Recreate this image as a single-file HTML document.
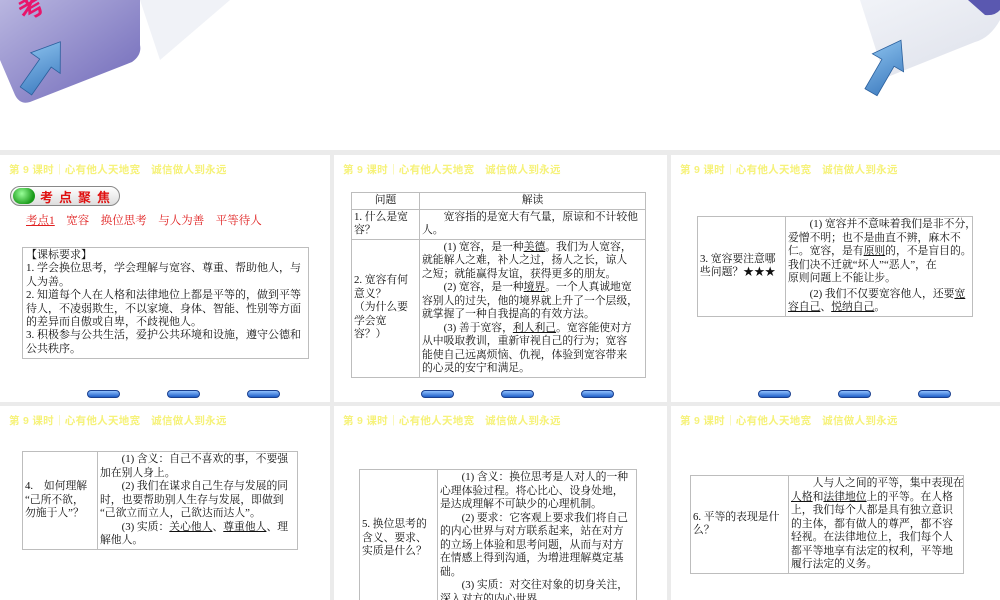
<!DOCTYPE html>
<html><head><meta charset="utf-8"><style>
*{margin:0;padding:0;box-sizing:border-box}
body{width:1000px;height:600px;position:relative;overflow:hidden;background:#fff;font-family:"Liberation Serif","Noto Serif CJK SC",serif;color:#111}
.gray{position:absolute;background:#ebebeb}
.p{position:absolute;background:#fff;overflow:hidden}
.h{position:absolute;left:9px;top:7px;font:bold 10.5px "Liberation Sans","Noto Sans CJK SC",sans-serif;color:#f6f27a;white-space:nowrap;letter-spacing:0.3px}
.btn{position:absolute;width:33px;height:8px;border-radius:4px;background:linear-gradient(#8fc0ff,#1f5fc8);border:1px solid #1a3f8f}
table{position:absolute;border-collapse:collapse;table-layout:fixed;font-size:10.8px;line-height:13.5px;white-space:nowrap}
td{border:1px solid #bdbdbd;padding:1px 2px;vertical-align:middle;overflow:hidden}
.i{text-indent:2em}
</style></head><body>
<svg style="position:absolute;left:0;top:0" width="1000" height="150">
<defs><linearGradient id="pg" x1="0" y1="0" x2="1" y2="1"><stop offset="0" stop-color="#b9b6e0"/><stop offset="1" stop-color="#6e67b8"/></linearGradient>
<linearGradient id="ag" x1="0" y1="0" x2="1" y2="1"><stop offset="0" stop-color="#8ec4ef"/><stop offset="1" stop-color="#3a78bd"/></linearGradient>
<linearGradient id="wg" x1="0" y1="0" x2="1" y2="1"><stop offset="0" stop-color="#f4f6fa"/><stop offset="1" stop-color="#dde0ea"/></linearGradient></defs>
<path d="M0 0 L140 0 L140 45 Q142 55 132 62 L30 102 Q20 105 15 95 L0 60 Z" fill="url(#pg)"/>
<path d="M140 0 L230 0 L160 60 Z" fill="#f0f2f7"/>
<text x="22" y="18" font-size="26" font-weight="bold" fill="#e8156b" font-family="Noto Sans CJK SC" transform="rotate(-30 30 15)">考</text>
<g transform="translate(42,68) rotate(35)"><path d="M0 -32 L-18 -6 L-7 -6 L-7 28 L7 28 L7 -6 L18 -6 Z" fill="url(#ag)" stroke="#2a5f9c" stroke-width="0.8"/></g>
<path d="M810 0 L1000 0 L1000 20 Q990 38 975 42 L885 78 L860 0 Z" fill="url(#wg)"/>
<path d="M968 0 L1000 0 L1000 10 Q995 16 985 15 Z" fill="#5a58b0"/>
<g transform="translate(885,68) rotate(30)"><path d="M0 -32 L-18 -6 L-7 -6 L-7 28 L7 28 L7 -6 L18 -6 Z" fill="url(#ag)" stroke="#2a5f9c" stroke-width="0.8"/></g>
</svg>
<div class="gray" style="left:0;top:150px;width:1000px;height:450px"></div>

<div class="p" style="left:0;top:155px;width:330px;height:247px">
<div class="h">第 9 课时｜心有他人天地宽　诚信做人到永远</div>
<div style="position:absolute;left:10px;top:31px;width:110px;height:20px;border-radius:10px;border:1px solid #888;background:linear-gradient(#fff,#ddd)"></div>
<div style="position:absolute;left:13px;top:33px;width:22px;height:16px;border-radius:8px;background:radial-gradient(circle at 40% 35%,#9f9,#1a9a1a 70%)"></div>
<div style="position:absolute;left:40px;top:32px;font:bold 13px 'Noto Sans CJK SC',sans-serif;color:#e01010;letter-spacing:6px">考点聚焦</div>
<div style="position:absolute;left:26px;top:57px;font-size:11.5px;color:#e02020;white-space:nowrap"><u>考点1</u>　宽容　换位思考　与人为善　平等待人</div>
<div style="position:absolute;left:22px;top:92px;width:287px;border:1px solid #bdbdbd;padding:1px 3px 2px;font-size:11px;line-height:13.4px;white-space:nowrap;overflow:hidden">【课标要求】<br>1. 学会换位思考，学会理解与宽容、尊重、帮助他人，与<br>人为善。<br>2. 知道每个人在人格和法律地位上都是平等的，做到平等<br>待人，不凌弱欺生，不以家境、身体、智能、性别等方面<br>的差异而自傲或自卑，不歧视他人。<br>3. 积极参与公共生活，爱护公共环境和设施，遵守公德和<br>公共秩序。</div>
<div class="btn" style="left:87px;top:235px"></div><div class="btn" style="left:167px;top:235px"></div><div class="btn" style="left:247px;top:235px"></div>
</div>

<div class="p" style="left:334px;top:155px;width:333px;height:247px">
<div class="h">第 9 课时｜心有他人天地宽　诚信做人到永远</div>
<table style="left:17px;top:37px;width:295px">
<col style="width:68px"><col>
<tr><td style="text-align:center">问题</td><td style="text-align:center">解读</td></tr>
<tr><td>1. 什么是宽<br>容？</td><td><div class="i">宽容指的是宽大有气量，原谅和不计较他<br>人。</div></td></tr>
<tr><td>2. 宽容有何<br>意义？<br>（为什么要<br>学会宽<br>容？）</td><td><div class="i">(1) 宽容，是一种<u>美德</u>。我们为人宽容，<br>就能解人之难，补人之过，扬人之长，谅人<br>之短；就能赢得友谊，获得更多的朋友。</div><div class="i">(2) 宽容，是一种<u>境界</u>。一个人真诚地宽<br>容别人的过失，他的境界就上升了一个层级，<br>就掌握了一种自我提高的有效方法。</div><div class="i">(3) 善于宽容，<u>利人利己</u>。宽容能使对方<br>从中吸取教训，重新审视自己的行为；宽容<br>能使自己远离烦恼、仇视，体验到宽容带来<br>的心灵的安宁和满足。</div></td></tr>
</table>
<div class="btn" style="left:87px;top:235px"></div><div class="btn" style="left:167px;top:235px"></div><div class="btn" style="left:247px;top:235px"></div>
</div>

<div class="p" style="left:671px;top:155px;width:329px;height:247px">
<div class="h">第 9 课时｜心有他人天地宽　诚信做人到永远</div>
<table style="left:26px;top:61px;width:276px">
<col style="width:88px"><col>
<tr><td>3. 宽容要注意哪<br>些问题？★★★</td><td><div class="i">(1) 宽容并不意味着我们是非不分，<br>爱憎不明；也不是曲直不辨，麻木不<br>仁。宽容，是有<u>原则</u>的，不是盲目的。<br>我们决不迁就“坏人”“恶人”，在<br>原则问题上不能让步。</div><div class="i" style="margin-top:2px">(2) 我们不仅要宽容他人，还要<u>宽<br>容自己</u>、<u>悦纳自己</u>。</div></td></tr>
</table>
<div class="btn" style="left:87px;top:235px"></div><div class="btn" style="left:167px;top:235px"></div><div class="btn" style="left:247px;top:235px"></div>
</div>

<div class="p" style="left:0;top:406px;width:330px;height:194px">
<div class="h">第 9 课时｜心有他人天地宽　诚信做人到永远</div>
<table style="left:22px;top:45px;width:276px">
<col style="width:75px"><col>
<tr><td>4.　如何理解<br>“己所不欲，<br>勿施于人”？</td><td><div class="i">(1) 含义：自己不喜欢的事，不要强<br>加在别人身上。</div><div class="i">(2) 我们在谋求自己生存与发展的同<br>时，也要帮助别人生存与发展，即做到<br>“己欲立而立人，己欲达而达人”。</div><div class="i">(3) 实质：<u>关心他人</u>、<u>尊重他人</u>、理<br>解他人。</div></td></tr>
</table>
</div>

<div class="p" style="left:334px;top:406px;width:333px;height:194px">
<div class="h">第 9 课时｜心有他人天地宽　诚信做人到永远</div>
<table style="left:25px;top:63px;width:278px">
<col style="width:78px"><col>
<tr><td>5. 换位思考的<br>含义、要求、<br>实质是什么？</td><td><div class="i">(1) 含义：换位思考是人对人的一种<br>心理体验过程。将心比心、设身处地，<br>是达成理解不可缺少的心理机制。</div><div class="i">(2) 要求：它客观上要求我们将自己<br>的内心世界与对方联系起来，站在对方<br>的立场上体验和思考问题，从而与对方<br>在情感上得到沟通，为增进理解奠定基<br>础。</div><div class="i">(3) 实质：对交往对象的切身关注，<br>深入对方的内心世界。</div></td></tr>
</table>
</div>

<div class="p" style="left:671px;top:406px;width:329px;height:194px">
<div class="h">第 9 课时｜心有他人天地宽　诚信做人到永远</div>
<table style="left:19px;top:69px;width:274px">
<col style="width:98px"><col>
<tr><td>6. 平等的表现是什<br>么？</td><td><div class="i">人与人之间的平等，集中表现在<br><u>人格</u>和<u>法律地位</u>上的平等。在人格<br>上，我们每个人都是具有独立意识<br>的主体，都有做人的尊严，都不容<br>轻视。在法律地位上，我们每个人<br>都平等地享有法定的权利，平等地<br>履行法定的义务。</div></td></tr>
</table>
</div>
</body></html>
